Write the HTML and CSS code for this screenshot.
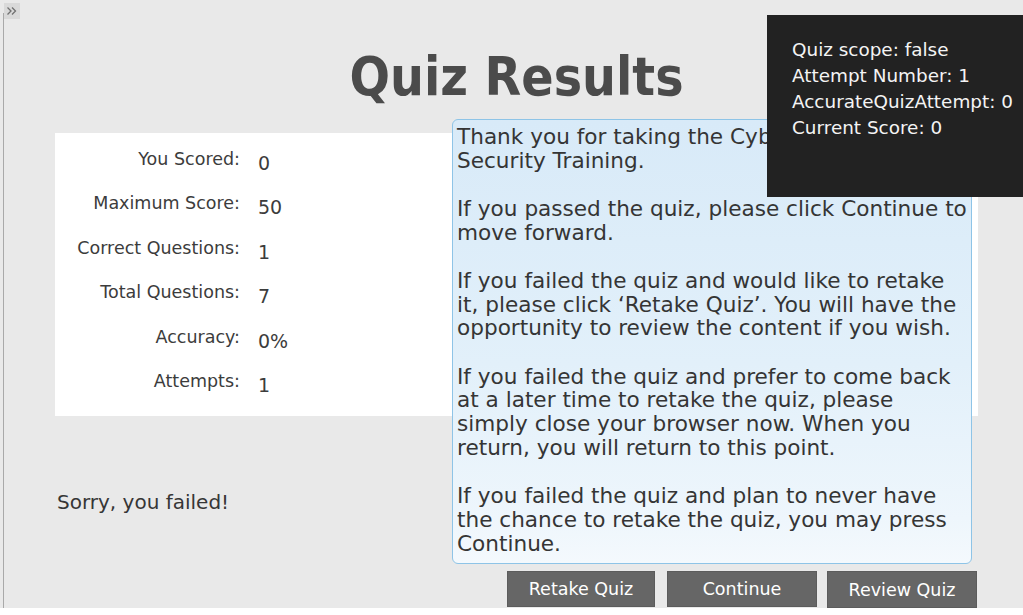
FILE: index.html
```html
<!DOCTYPE html>
<html lang="en">
<head>
<meta charset="utf-8">
<title>Quiz Results</title>
<link rel="stylesheet" href="styles.css">
</head>
<body>
<div class="shell">
  <div class="rail"></div>
  <main class="stage">
    <h1 class="title">Quiz Results</h1>
    <div class="card"></div>
    <div class="stats">
      <div class="label">You Scored:</div><div class="value">0</div>
      <div class="label">Maximum Score:</div><div class="value">50</div>
      <div class="label">Correct Questions:</div><div class="value">1</div>
      <div class="label">Total Questions:</div><div class="value">7</div>
      <div class="label">Accuracy:</div><div class="value">0%</div>
      <div class="label">Attempts:</div><div class="value">1</div>
    </div>
    <div class="message">
      <p>Thank you for taking the Cyber<br>Security Training.</p>
      <p>If you passed the quiz, please click Continue to<br>move forward.</p>
      <p>If you failed the quiz and would like to retake<br>it, please click ‘Retake Quiz’. You will have the<br>opportunity to review the content if you wish.</p>
      <p>If you failed the quiz and prefer to come back<br>at a later time to retake the quiz, please<br>simply close your browser now. When you<br>return, you will return to this point.</p>
      <p>If you failed the quiz and plan to never have<br>the chance to retake the quiz, you may press<br>Continue.</p>
    </div>
    <div class="verdict">Sorry, you failed!</div>
    <div class="actions">
      <button class="btn btn-retake">Retake Quiz</button>
      <button class="btn btn-continue">Continue</button>
      <button class="btn btn-review">Review Quiz</button>
    </div>
  </main>
  <button class="toggle" aria-label="Expand">
    <svg width="16" height="16" viewBox="0 0 16 16"><path d="M3.5 4.5l3.5 3.5-3.5 3.5M8 4.5l3.5 3.5-3.5 3.5" fill="none" stroke="#707070" stroke-width="1.3"/></svg>
  </button>
  <aside class="debug">
    <div>Quiz scope: false</div>
    <div>Attempt Number: 1</div>
    <div>AccurateQuizAttempt: 0</div>
    <div>Current Score: 0</div>
  </aside>
</div>
</body>
</html>
```
FILE: styles.css
```css
html, body {
  margin: 0;
  padding: 0;
  background: #ffffff;
}
body {
  font-family: "DejaVu Sans", Verdana, sans-serif;
  color: #3e3e3e;
}
.shell {
  position: relative;
  display: flex;
  height: 608px;
  background: #e9e9e9;
  overflow: hidden;
}
.rail {
  width: 3px;
  margin-top: 13px;
  border-right: 1px solid #a9a9a9;
  flex: none;
}
.stage {
  flex: 1;
  display: grid;
  grid-template-columns: 51px 397px 520px 6px 1fr;
  grid-template-rows: 119px 14px 283px 148px 7px 37px;
}
.title {
  grid-row: 1;
  grid-column: 1 / -1;
  margin: 0;
  padding: 47px 0 0 6px;
  text-align: center;
  font-family: "DejaVu Sans Condensed", "DejaVu Sans", sans-serif;
  font-weight: bold;
  font-size: 53px;
  line-height: 60px;
  color: #4b4b4b;
}
.card {
  grid-row: 3;
  grid-column: 2 / 5;
  background: #ffffff;
}
.stats {
  grid-row: 3;
  grid-column: 2;
  display: grid;
  grid-template-columns: 185px 1fr;
  grid-auto-rows: 44.4px;
  column-gap: 18px;
  padding-top: 4px;
}
.label {
  text-align: right;
  font-size: 17.5px;
  line-height: 44px;
  color: #3c3c3c;
}
.value {
  font-size: 19px;
  line-height: 44px;
  padding-top: 4px;
  color: #3c3c3c;
}
.message {
  grid-row: 2 / 5;
  grid-column: 3;
  box-sizing: border-box;
  border: 1px solid #8ec4e7;
  border-radius: 6px;
  background: linear-gradient(to bottom, #d8eaf8 0%, #e2f0fa 55%, #eef6fc 90%, #f4f9fd 100%);
  padding: 5px 0 0 4px;
  font-size: 21.6px;
  line-height: 23.7px;
  color: #353535;
  white-space: nowrap;
}
.message p {
  margin: 0 0 24.6px;
}
.verdict {
  grid-row: 4;
  grid-column: 2;
  padding: 74px 0 0 2px;
  font-size: 20px;
  line-height: 24px;
  color: #363636;
}
.actions {
  grid-row: 6;
  grid-column: 3 / 5;
  display: flex;
  align-items: flex-start;
  padding-left: 55px;
}
.btn {
  height: 36px;
  border: none;
  background: #666666;
  color: #ffffff;
  font-family: "DejaVu Sans", sans-serif;
  font-size: 17.5px;
  padding: 0;
  box-shadow: inset 0 0 0 1px #5c5c5c;
}
.btn-retake { width: 148px; }
.btn-continue { width: 150px; margin-left: 12px; }
.btn-review { width: 150px; margin-left: 10px; height: 37px; }
.toggle {
  position: absolute;
  left: 4px;
  top: 3px;
  width: 16px;
  height: 16px;
  padding: 0;
  border: none;
  background: #d9d9d9;
  display: flex;
  align-items: center;
  justify-content: center;
}
.debug {
  position: absolute;
  left: 767px;
  top: 15px;
  width: 256px;
  height: 182px;
  box-sizing: border-box;
  padding: 22px 0 0 25px;
  background: #222222;
  color: #f4f4f4;
  font-size: 18.4px;
  line-height: 26px;
}
```
